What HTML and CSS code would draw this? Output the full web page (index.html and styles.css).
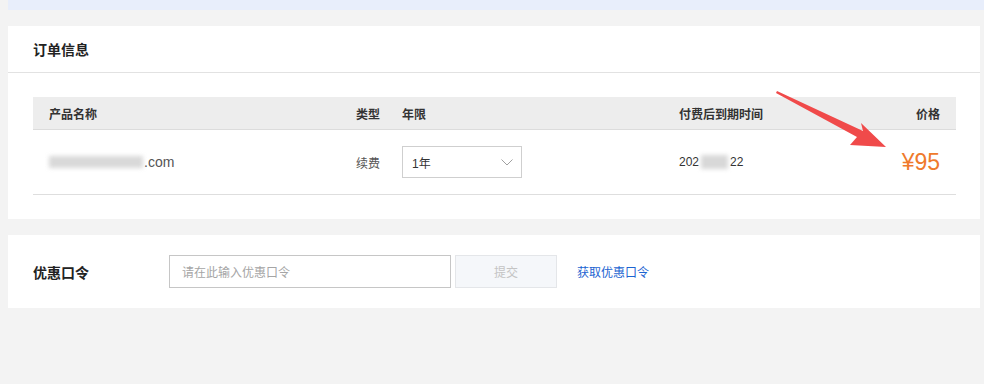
FILE: index.html
```html
<!DOCTYPE html>
<html lang="zh-CN">
<head>
<meta charset="utf-8">
<title>订单信息</title>
<link rel="stylesheet" href="styles.css">
</head>
<body>
<div class="page">
  <div class="notice-band"></div>
  <div class="content">
    <section class="card order-card">
      <div class="card-head">订单信息</div>
      <div class="card-body">
        <div class="table">
          <div class="row head-row">
            <div class="cell">产品名称</div>
            <div class="cell">类型</div>
            <div class="cell">年限</div>
            <div class="cell">付费后到期时间</div>
            <div class="cell right">价格</div>
          </div>
          <div class="row body-row">
            <div class="cell domain"><span class="blur blur-domain"></span>.com</div>
            <div class="cell type">续费</div>
            <div class="cell">
              <div class="select">
                <span>1年</span>
                <svg class="chevron" width="12" height="7" viewBox="0 0 12 7"><path d="M0.5 0.5 L6 6 L11.5 0.5" fill="none" stroke="#a0a0a0" stroke-width="1"/></svg>
              </div>
            </div>
            <div class="cell date">202<span class="blur blur-date"></span>22</div>
            <div class="cell right price">¥95</div>
          </div>
        </div>
      </div>
      <svg class="arrow" width="130" height="70" viewBox="0 0 130 70">
        <path d="M1 2 L87 42 L85 34 L110 58 L74 56 L81 48 L0 4 Z" fill="#f04a4a"/>
      </svg>
    </section>
    <section class="card coupon-card">
      <div class="coupon-label">优惠口令</div>
      <div class="coupon-input">请在此输入优惠口令</div>
      <div class="coupon-btn">提交</div>
      <a class="coupon-link">获取优惠口令</a>
    </section>
  </div>
</div>
</body>
</html>
```
FILE: styles.css
```css
* { box-sizing: border-box; }
html, body { margin: 0; padding: 0; }
body {
  background: #f3f3f3;
  font-family: "Liberation Sans", "Noto Sans CJK SC", sans-serif;
  color: #333;
  width: 984px;
  height: 384px;
  overflow: hidden;
}
.page { padding-left: 8px; }
.notice-band {
  height: 10px;
  background: #e8eefb;
}
.content {
  padding: 16px 4px 0 0;
  display: flex;
  flex-direction: column;
  gap: 16px;
}
.card { background: #fff; }
.order-card { position: relative; }
.card-head {
  height: 47px;
  border-bottom: 1px solid #e2e2e2;
  padding-left: 25px;
  font-size: 14px;
  font-weight: bold;
  color: #222;
  display: flex;
  align-items: center;
}
.card-body { padding: 24px 24px 24px 25px; }
.row {
  display: grid;
  grid-template-columns: 307px 46px 277px 1fr auto;
  align-items: center;
  padding: 0 16px;
  font-size: 12px;
}
.head-row {
  height: 33px;
  background: #ededed;
  border-bottom: 1px solid #dcdcdc;
  font-weight: bold;
  color: #333;
}
.body-row {
  height: 65px;
  border-bottom: 1px solid #dedede;
}
.right { text-align: right; }
.domain { font-size: 14px; color: #555; display: flex; align-items: center; }
.blur {
  display: inline-block;
  background: #c9c9c9;
  filter: blur(2px);
}
.blur-domain { width: 94px; height: 12px; margin-right: 1px; opacity: .7; }
.blur-date { width: 27px; height: 14px; background: #d8d8d8; margin: 0 2px; vertical-align: middle; }
.type { color: #555; }
.select {
  width: 120px;
  height: 32px;
  border: 1px solid #cfcfcf;
  padding: 0 8px 0 9px;
  display: flex;
  align-items: center;
  justify-content: space-between;
  font-size: 12px;
  color: #333;
}
.date { color: #333; font-size: 12px; }
.price {
  color: #ef7a2c;
  font-size: 23px;
}
.arrow {
  position: absolute;
  left: 768px;
  top: 63px;
}
.coupon-card {
  height: 73px;
  display: flex;
  align-items: center;
  padding-left: 25px;
}
.coupon-label {
  width: 136px;
  font-size: 14px;
  font-weight: bold;
  color: #222;
}
.coupon-input {
  width: 282px;
  height: 33px;
  border: 1px solid #c6c6c6;
  padding-left: 12px;
  display: flex;
  align-items: center;
  font-size: 12px;
  color: #a5a5a5;
}
.coupon-btn {
  width: 102px;
  height: 33px;
  margin-left: 4px;
  border: 1px solid #e4e6e9;
  background: #f5f7fa;
  color: #c4c4c4;
  font-size: 12px;
  display: flex;
  align-items: center;
  justify-content: center;
}
.coupon-link {
  margin-left: 20px;
  font-size: 12px;
  color: #1c64d1;
}
```
